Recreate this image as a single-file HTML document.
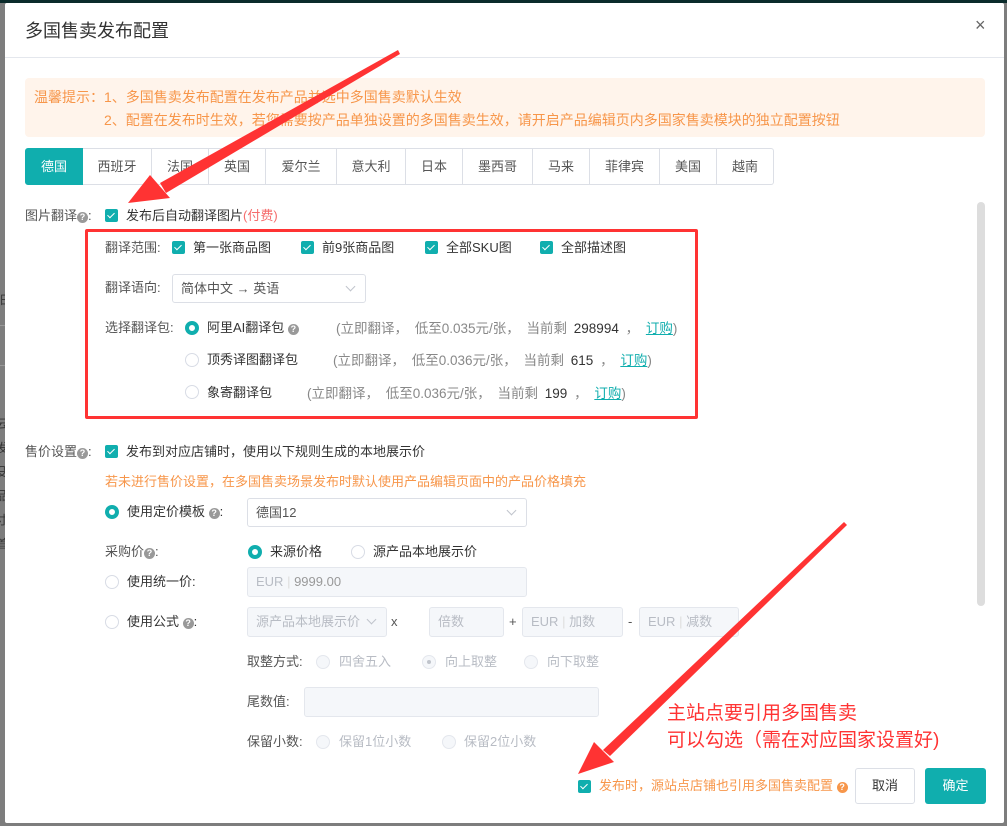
<!DOCTYPE html>
<html><head><meta charset="utf-8"><style>
*{box-sizing:border-box;margin:0;padding:0}
body{width:1007px;height:826px;overflow:hidden;background:#7d7d7d;font-family:"Liberation Sans","Noto Sans CJK SC",sans-serif;font-size:13px;color:#555;position:relative}
.a{position:absolute;white-space:nowrap}
.t{line-height:16px}
.cb{position:absolute;width:13px;height:13px;background:#10aeae;border-radius:2px}
.cb:after{content:"";position:absolute;left:4px;top:2px;width:3px;height:6px;border:solid #fff;border-width:0 1.5px 1.5px 0;transform:rotate(45deg)}
.rd{position:absolute;width:14px;height:14px;border-radius:50%;border:1px solid #d8dce5;background:#fff}
.rd.on{border:4px solid #10aeae}
.rd.dis{background:#f5f7fa;border-color:#e4e7ed}
.rd.dot:after{content:"";position:absolute;left:4px;top:4px;width:4px;height:4px;border-radius:50%;background:#c0c4cc}
.q{display:inline-block;width:11px;height:11px;border-radius:50%;background:#999;color:#fff;font-size:9px;line-height:11px;text-align:center;vertical-align:0px;font-weight:bold}
.inp{position:absolute;border:1px solid #dcdfe6;border-radius:3px;background:#fff;padding-left:8px;color:#555}
.inp.dis{background:#f5f7fa;border-color:#e4e7ed;color:#b8bcc4}
.chev{position:absolute;width:7px;height:7px;border:solid #c0c4cc;border-width:0 1px 1px 0;transform:rotate(45deg)}
.tab{position:absolute;top:148px;height:37px;border:1px solid #dcdfe6;border-left:none;line-height:35px;text-align:center;color:#555;font-size:13px;background:#fff}
.gray{color:#888;font-size:13.5px;word-spacing:3px}
a{color:#10aeae;text-decoration:underline}
</style></head><body>
<div class="a" style="left:0;top:0;width:1007px;height:3px;background:#0b2b2b"></div>
<div class="a t" style="left:0;top:292px;color:#333;font-size:12px">田</div>
<div class="a" style="left:0;top:325px;width:5px;height:1px;background:#999"></div>
<div class="a" style="left:0;top:365px;width:5px;height:1px;background:#999"></div>
<div class="a t" style="left:-4px;top:412px;color:#333;font-size:12px;line-height:24px;white-space:normal;width:12px">云<br>发<br>殳<br>品<br>寸<br>首</div>
<div class="a" style="left:5px;top:3px;width:999px;height:820px;background:#fff;border-radius:2px"></div>
<div class="a" style="left:25px;top:19px;font-size:18px;color:#333;line-height:24px">多国售卖发布配置</div>
<div class="a" style="left:975px;top:15px;font-size:18px;color:#666">×</div>
<div class="a" style="left:5px;top:57px;width:999px;height:1px;background:#e4e7ed"></div>
<div class="a" style="left:25px;top:78px;width:960px;height:59px;background:#fff4eb;border-radius:4px"></div>
<div class="a t" style="left:34px;top:89px;color:#f7964a;font-size:14px">温馨提示：1、多国售卖发布配置在发布产品并选中多国售卖默认生效</div>
<div class="a t" style="left:104px;top:112px;color:#f7964a;font-size:14px">2、配置在发布时生效，若您需要按产品单独设置的多国售卖生效，请开启产品编辑页内多国家售卖模块的独立配置按钮</div>
<div class="tab" style="left:25px;width:58px;background:#10aeae;color:#fff;border:1px solid #10aeae;border-radius:3px 0 0 3px">德国</div>
<div class="tab" style="left:83px;width:69px">西班牙</div>
<div class="tab" style="left:152px;width:57px">法国</div>
<div class="tab" style="left:209px;width:57px">英国</div>
<div class="tab" style="left:266px;width:71px">爱尔兰</div>
<div class="tab" style="left:337px;width:69px">意大利</div>
<div class="tab" style="left:406px;width:57px">日本</div>
<div class="tab" style="left:463px;width:70px">墨西哥</div>
<div class="tab" style="left:533px;width:57px">马来</div>
<div class="tab" style="left:590px;width:70px">菲律宾</div>
<div class="tab" style="left:660px;width:57px">美国</div>
<div class="tab" style="left:717px;width:57px;border-radius:0 3px 3px 0">越南</div>
<div class="a" style="left:977px;top:202px;width:8px;height:404px;background:#ddd;border-radius:4px"></div>

<div class="a t" style="left:25px;top:208px">图片翻译<span class="q">?</span>:</div>
<div class="cb" style="left:105px;top:209px"></div>
<div class="a t" style="left:126px;top:208px;color:#333">发布后自动翻译图片<span style="color:#f56c6c">(付费)</span></div>
<div class="a" style="left:85px;top:229px;width:613px;height:190px;border:3px solid #f33;border-radius:2px"></div>
<div class="a t" style="left:105px;top:240px">翻译范围:</div>
<div class="cb" style="left:172px;top:241px"></div><div class="a t" style="left:193px;top:240px;color:#333">第一张商品图</div>
<div class="cb" style="left:301px;top:241px"></div><div class="a t" style="left:322px;top:240px;color:#333">前9张商品图</div>
<div class="cb" style="left:425px;top:241px"></div><div class="a t" style="left:446px;top:240px;color:#333">全部SKU图</div>
<div class="cb" style="left:540px;top:241px"></div><div class="a t" style="left:561px;top:240px;color:#333">全部描述图</div>
<div class="a t" style="left:105px;top:280px">翻译语向:</div>
<div class="inp" style="left:172px;top:274px;width:194px;height:29px;line-height:27px">简体中文 → 英语</div><div class="chev" style="left:347px;top:283px"></div>
<div class="a t" style="left:105px;top:320px">选择翻译包:</div>
<div class="rd on" style="left:185px;top:321px"></div><div class="a t" style="left:207px;top:320px;color:#333">阿里AI翻译包 <span class="q">?</span></div>
<div class="a t gray" style="left:336px;top:321px">(立即翻译， 低至0.035元/张， 当前剩 <span style="color:#333">298994</span> ， <a>订购</a>)</div>
<div class="rd" style="left:185px;top:353px"></div><div class="a t" style="left:207px;top:352px;color:#333">顶秀译图翻译包</div>
<div class="a t gray" style="left:333px;top:353px">(立即翻译， 低至0.036元/张， 当前剩 <span style="color:#333">615</span> ， <a>订购</a>)</div>
<div class="rd" style="left:185px;top:385px"></div><div class="a t" style="left:207px;top:385px;color:#333">象寄翻译包</div>
<div class="a t gray" style="left:307px;top:386px">(立即翻译， 低至0.036元/张， 当前剩 <span style="color:#333">199</span> ， <a>订购</a>)</div>

<div class="a t" style="left:25px;top:444px">售价设置<span class="q">?</span>:</div>
<div class="cb" style="left:105px;top:445px"></div>
<div class="a t" style="left:126px;top:444px;color:#333">发布到对应店铺时，使用以下规则生成的本地展示价</div>
<div class="a t" style="left:105px;top:474px;color:#f7964a">若未进行售价设置，在多国售卖场景发布时默认使用产品编辑页面中的产品价格填充</div>
<div class="rd on" style="left:105px;top:505px"></div><div class="a t" style="left:127px;top:504px;color:#333">使用定价模板 <span class="q">?</span>:</div>
<div class="inp" style="left:247px;top:498px;width:280px;height:29px;line-height:27px">德国12</div><div class="chev" style="left:508px;top:507px"></div>
<div class="a t" style="left:105px;top:544px">采购价<span class="q">?</span>:</div>
<div class="rd on" style="left:248px;top:545px"></div><div class="a t" style="left:270px;top:544px;color:#333">来源价格</div>
<div class="rd" style="left:351px;top:545px"></div><div class="a t" style="left:373px;top:544px;color:#333">源产品本地展示价</div>
<div class="rd" style="left:105px;top:575px"></div><div class="a t" style="left:127px;top:574px;color:#333">使用统一价:</div>
<div class="inp dis" style="left:247px;top:567px;width:280px;height:30px;line-height:28px">EUR <span style="color:#ddd">|</span> <span style="color:#999">9999.00</span></div>
<div class="rd" style="left:105px;top:615px"></div><div class="a t" style="left:127px;top:614px;color:#333">使用公式 <span class="q">?</span>:</div>
<div class="inp dis" style="left:247px;top:607px;width:140px;height:30px;line-height:28px">源产品本地展示价</div><div class="chev" style="left:368px;top:616px"></div>
<div class="a t" style="left:391px;top:614px">x</div>
<div class="inp dis" style="left:429px;top:607px;width:75px;height:30px;line-height:28px">倍数</div>
<div class="a t" style="left:509px;top:614px">+</div>
<div class="inp dis" style="left:522px;top:607px;width:101px;height:30px;line-height:28px">EUR <span style="color:#ddd">|</span> 加数</div>
<div class="a t" style="left:628px;top:614px">-</div>
<div class="inp dis" style="left:639px;top:607px;width:100px;height:30px;line-height:28px">EUR <span style="color:#ddd">|</span> 减数</div>
<div class="a t" style="left:247px;top:654px">取整方式:</div>
<div class="rd dis" style="left:316px;top:655px"></div><div class="a t" style="left:339px;top:654px;color:#b8bcc4">四舍五入</div>
<div class="rd dis dot" style="left:422px;top:655px"></div><div class="a t" style="left:445px;top:654px;color:#b8bcc4">向上取整</div>
<div class="rd dis" style="left:524px;top:655px"></div><div class="a t" style="left:547px;top:654px;color:#b8bcc4">向下取整</div>
<div class="a t" style="left:247px;top:694px">尾数值:</div>
<div class="inp dis" style="left:304px;top:687px;width:295px;height:30px"></div>
<div class="a t" style="left:247px;top:734px">保留小数:</div>
<div class="rd dis" style="left:316px;top:735px"></div><div class="a t" style="left:339px;top:734px;color:#b8bcc4">保留1位小数</div>
<div class="rd dis" style="left:442px;top:735px"></div><div class="a t" style="left:464px;top:734px;color:#b8bcc4">保留2位小数</div>

<div class="a" style="left:667px;top:700px;color:#f33;font-size:19px;line-height:27px">主站点要引用多国售卖<br>可以勾选（需在对应国家设置好)</div>
<div class="cb" style="left:578px;top:780px"></div>
<div class="a t" style="left:599px;top:778px;color:#f7964a">发布时，源站点店铺也引用多国售卖配置 <span class="q" style="background:#f7964a">?</span></div>
<div class="a" style="left:855px;top:768px;width:60px;height:36px;border:1px solid #dcdfe6;border-radius:3px;text-align:center;line-height:34px;color:#333">取消</div>
<div class="a" style="left:925px;top:768px;width:61px;height:36px;background:#10aeae;border-radius:3px;text-align:center;line-height:36px;color:#fff">确定</div>

<svg class="a" style="left:0;top:0" width="1007" height="826">
<polygon points="398,50 160,183 166,193 400,54" fill="#f33"/>
<polygon points="128,203 150,175 170,198" fill="#f33"/>
<polygon points="844,522 603,750 610,756 847,525" fill="#f33"/>
<polygon points="578,774 594,742 614,762" fill="#f33"/>
</svg>
</body></html>
